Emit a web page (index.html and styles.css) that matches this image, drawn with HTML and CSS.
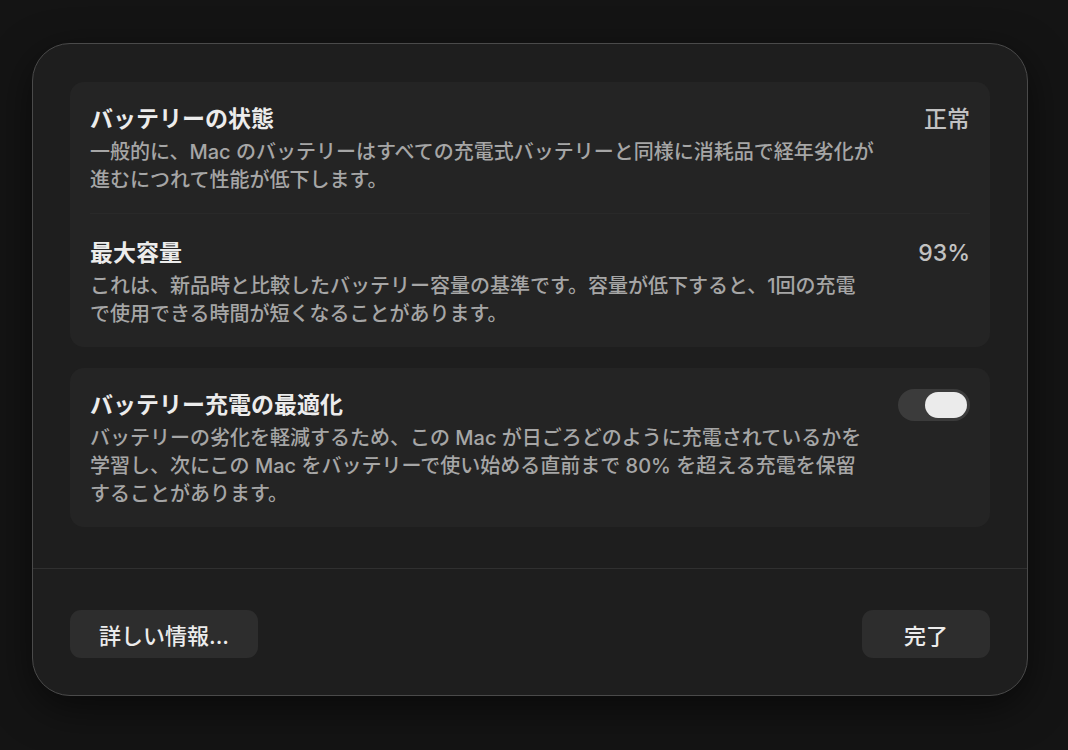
FILE: index.html
```html
<!DOCTYPE html>
<html lang="ja">

<head>
    <meta charset="UTF-8">
    <meta name="viewport" content="width=device-width, initial-scale=1.0">
    <title>バッテリーの状態</title>
    <link rel="stylesheet" href="styles.css">
</head>

<body>
    <div class="sheet">
        <div class="sheet-body">
            <div class="group">
                <div class="row">
                    <div class="row-text">
                        <div class="row-title">バッテリーの状態</div>
                        <div class="row-desc">一般的に、Mac のバッテリーはすべての充電式バッテリーと同様に消耗品で経年劣化が<br>進むにつれて性能が低下します。</div>
                    </div>
                    <div class="row-value">正常</div>
                </div>
                <div class="row-sep"></div>
                <div class="row">
                    <div class="row-text">
                        <div class="row-title">最大容量</div>
                        <div class="row-desc">これは、新品時と比較したバッテリー容量の基準です。容量が低下すると、1回の充電<br>で使用できる時間が短くなることがあります。</div>
                    </div>
                    <div class="row-value">93%</div>
                </div>
            </div>

            <div class="group">
                <div class="row">
                    <div class="row-text">
                        <div class="row-title">バッテリー充電の最適化</div>
                        <div class="row-desc">バッテリーの劣化を軽減するため、この Mac が日ごろどのように充電されているかを<br>学習し、次にこの Mac をバッテリーで使い始める直前まで 80% を超える充電を保留<br>することがあります。</div>
                    </div>
                    <label class="switch">
                        <input type="checkbox" checked>
                        <span class="switch-knob"></span>
                    </label>
                </div>
            </div>
        </div>

        <div class="sheet-footer">
            <button type="button" class="btn btn-info">詳しい情報...</button>
            <button type="button" class="btn btn-done">完了</button>
        </div>
    </div>
</body>

</html>
```

FILE: styles.css
```css
body {
    margin: 0;
    height: 750px;
    overflow: hidden;
    background: #141414;
    color: #ececec;
    font-family: Inter, 'Noto Sans CJK JP', sans-serif;
}

.sheet {
    margin: 43px 0 0 32px;
    width: 996px;
    height: 653px;
    box-sizing: border-box;
    background: #1e1e1e;
    border: 1px solid #4a4a4a;
    border-radius: 38px;
    box-shadow: 0 12px 40px rgba(0, 0, 0, 0.55);
    display: flex;
    flex-direction: column;
}

.sheet-body {
    padding: 38px 37px 41px 37px;
    display: flex;
    flex-direction: column;
    gap: 21px;
}

.group {
    background: #242424;
    border-radius: 14px;
}

.row {
    display: flex;
    align-items: flex-start;
    gap: 20px;
    padding: 22px 20px 19px 20px;
}

.row-sep + .row {
    padding-top: 24px;
}

.row-sep {
    height: 1px;
    margin: 0 20px;
    background: #292929;
}

.row-text {
    flex: 1;
    min-width: 0;
}

.row-title {
    font-size: 23px;
    font-weight: 700;
    line-height: 30px;
    color: #ececec;
}

.row-desc {
    margin-top: 4px;
    font-size: 20px;
    font-weight: 500;
    line-height: 28px;
    color: #a6a6a6;
    white-space: nowrap;
}

.row-value {
    font-size: 23px;
    font-weight: 500;
    line-height: 30px;
    color: #c2c2c2;
}

.switch {
    position: relative;
    width: 72px;
    height: 32px;
    margin-top: -1px;
    flex-shrink: 0;
}

.switch input {
    display: none;
}

.switch-knob {
    display: block;
    width: 100%;
    height: 100%;
    border-radius: 16px;
    background: #3b3b3b;
}

.switch-knob::after {
    content: "";
    position: absolute;
    top: 3px;
    right: 3px;
    width: 42px;
    height: 26px;
    border-radius: 13px;
    background: #ebebeb;
}

.sheet-footer {
    border-top: 1px solid #303030;
    padding: 41px 37px 37px 37px;
    display: flex;
    justify-content: space-between;
}

.btn {
    height: 48px;
    border: none;
    border-radius: 11px;
    background: #2d2d2d;
    color: #ececec;
    font-family: inherit;
    font-size: 22px;
    font-weight: 500;
    cursor: pointer;
}

.btn-info {
    width: 188px;
}

.btn-done {
    width: 128px;
}
```
